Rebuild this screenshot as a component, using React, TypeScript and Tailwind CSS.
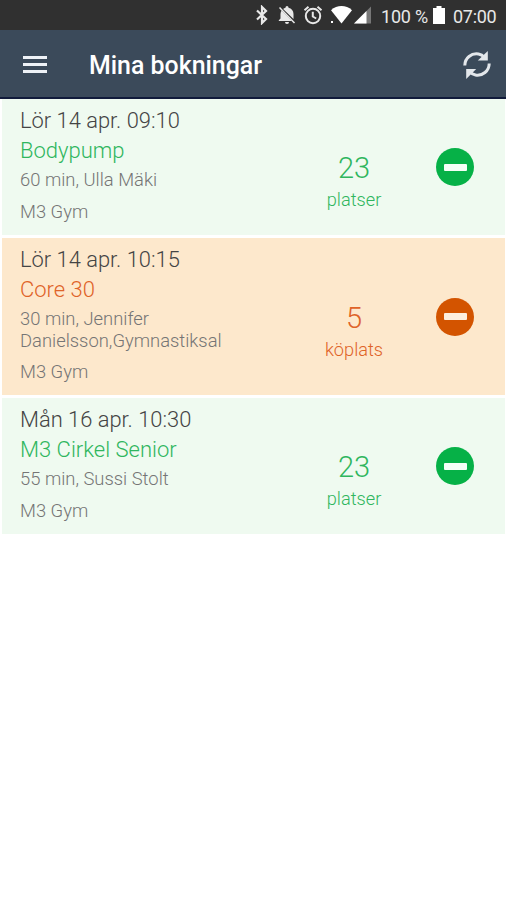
import React from 'react';
import clsx from 'clsx';

interface Booking {
  id: number;
  date: string;
  title: string;
  details: string[];
  location: string;
  count: number;
  countLabel: string;
  queued: boolean;
}

const bookings: Booking[] = [
  {
    id: 1,
    date: 'Lör 14 apr. 09:10',
    title: 'Bodypump',
    details: ['60 min, Ulla Mäki'],
    location: 'M3 Gym',
    count: 23,
    countLabel: 'platser',
    queued: false,
  },
  {
    id: 2,
    date: 'Lör 14 apr. 10:15',
    title: 'Core 30',
    details: ['30 min, Jennifer', 'Danielsson,Gymnastiksal'],
    location: 'M3 Gym',
    count: 5,
    countLabel: 'köplats',
    queued: true,
  },
  {
    id: 3,
    date: 'Mån 16 apr. 10:30',
    title: 'M3 Cirkel Senior',
    details: ['55 min, Sussi Stolt'],
    location: 'M3 Gym',
    count: 23,
    countLabel: 'platser',
    queued: false,
  },
];

function StatusBar() {
  return (
    <div className="flex h-[30px] items-center bg-[#303030] pl-[255px] text-[#e8e8e8]">
      {/* Bluetooth */}
      <svg className="h-5 w-[14px] shrink-0" viewBox="0 0 14 20" fill="none" stroke="currentColor" strokeWidth="2.2">
        <path d="M2 5.5l9 8.5-4 4V2l4 4-9 8.5" />
      </svg>
      {/* Notifications off */}
      <svg className="ml-[9px] h-5 w-[18px] shrink-0" viewBox="0 0 18 20" fill="currentColor">
        <path d="M9 19a2 2 0 0 0 2-2H7a2 2 0 0 0 2 2zM15.500 12V9c0-3-2-5.500-5-6.200V2.500a1.500 1.500 0 0 0-3 0v.3c-.9.200-1.700.600-2.400 1.100L15.500 14zM3.600 5.600A7 7 0 0 0 2.500 9v4.500L.8 15.200v.8h13z" />
        <path d="M1.500 2.500l15 15.500" stroke="currentColor" strokeWidth="1.500" />
      </svg>
      {/* Alarm */}
      <svg className="ml-[7px] h-5 w-5 shrink-0" viewBox="0 0 20 20" fill="none" stroke="currentColor" strokeWidth="2">
        <circle cx="10" cy="11" r="7.2" />
        <path d="M1.500 5.200l4-3.400M18.500 5.200l-4-3.400M9.800 6.800v4.700l3.400 2" />
      </svg>
      {/* Wifi */}
      <svg className="ml-[7px] h-5 w-[23px] shrink-0" viewBox="0 0 23 20" fill="#fff">
        <path d="M1 5.200C7-.3 16-.3 22 5.200L11.500 18.500z" />
        <path d="M1 16h2v2H1z" />
      </svg>
      {/* Signal */}
      <svg className="ml-px h-5 w-[18px] shrink-0" viewBox="0 0 18 20" fill="#fff">
        <path d="M0 18.500L17 1.500v17z" fill="#777" />
        <path d="M0 18.500L12.500 6v12.500z" />
      </svg>
      <span className="ml-[9px] w-[48px] shrink-0 whitespace-nowrap pt-[3px] text-[18px] leading-none tracking-[-0.2px]">100 %</span>
      <svg className="ml-1 h-5 w-3 shrink-0" viewBox="0 0 12 20" fill="#fff">
        <path d="M3.500 1h5v2H12v16H0V3h3.500z" />
      </svg>
      <span className="ml-2 whitespace-nowrap pt-[3px] text-[18px] leading-none tracking-[-0.3px]">07:00</span>
    </div>
  );
}

function Header() {
  return (
    <header className="flex h-[69px] items-center border-b-2 border-[#111b3b] bg-[#3b4a5a] pl-[23px] pr-[14px] pt-[3px]">
      <button className="-mt-0.5 flex w-6 flex-col gap-1" aria-label="Meny">
        <span className="h-[3px] bg-[#eef2f7]" />
        <span className="h-[3px] bg-[#eef2f7]" />
        <span className="h-[3px] bg-[#eef2f7]" />
      </button>
      <h1 className="ml-[42px] flex-1 pt-0.5 text-[24.9px] font-medium leading-none text-white">Mina bokningar</h1>
      <button aria-label="Uppdatera">
        <svg className="h-[30px] w-[30px]" viewBox="0 0 30 30" fill="none" stroke="#e3e7eb" strokeWidth="3">
          <path d="M2.800 15.500C2.800 8 9.500 2.800 16.500 4c2.500.4 4.500 1.700 6 3.400" />
          <path d="M27.200 13.500C27.200 21 20.500 26.200 13.500 25c-2.500-.4-4.500-1.700-6-3.400" />
          <path d="M25.800 1v9.500h-10z" fill="#e3e7eb" stroke="none" />
          <path d="M4.200 29V19h10z" fill="#e3e7eb" stroke="none" />
        </svg>
      </button>
    </header>
  );
}

function BookingCard({ booking }: { booking: Booking }) {
  const accent = booking.queued ? 'text-[#df6328]' : 'text-[#2fb65e]';

  return (
    <li
      className={clsx(
        'flex items-center pl-[18px] pr-[31px] font-light',
        booking.queued ? 'h-[157px] bg-[#fde8cc]' : 'h-[136px] bg-[#effaf0]'
      )}
    >
      <div className="h-full w-[264px] pt-[7px]">
        <p className="text-[21.9px] leading-[29px] text-[#444]">{booking.date}</p>
        <p className={clsx('pt-px text-[22px] leading-[29px]', accent)}>{booking.title}</p>
        <div className="mt-1 text-[18.4px] leading-[21.6px] text-[#757575]">
          {booking.details.map((line) => (
            <p key={line}>{line}</p>
          ))}
        </div>
        <p className="mt-2.5 text-[18.4px] leading-[22px] text-[#757575]">{booking.location}</p>
      </div>
      <div className={clsx('flex w-[140px] flex-col items-center pt-[30px]', accent)}>
        <span className="text-[29px] leading-9">{booking.count}</span>
        <span className="text-[18.2px] leading-7">{booking.countLabel}</span>
      </div>
      <button
        className={clsx(
          'ml-[12px] flex h-[38px] w-[38px] shrink-0 items-center justify-center rounded-full',
          booking.queued ? 'bg-[#d35400]' : 'bg-[#06b147]'
        )}
        aria-label="Avboka"
      >
        <span className={clsx('h-[7px] w-[23px] rounded-[1px]', booking.queued ? 'bg-[#fdeedd]' : 'bg-[#f4fff6]')} />
      </button>
    </li>
  );
}

export default function App() {
  return (
    <div className="min-h-[900px] w-[506px] bg-white font-['Roboto',sans-serif]">
      <StatusBar />
      <Header />
      <ul className="flex flex-col gap-[3px] pl-0.5 pr-px">
        {bookings.map((booking) => (
          <BookingCard key={booking.id} booking={booking} />
        ))}
      </ul>
    </div>
  );
}
